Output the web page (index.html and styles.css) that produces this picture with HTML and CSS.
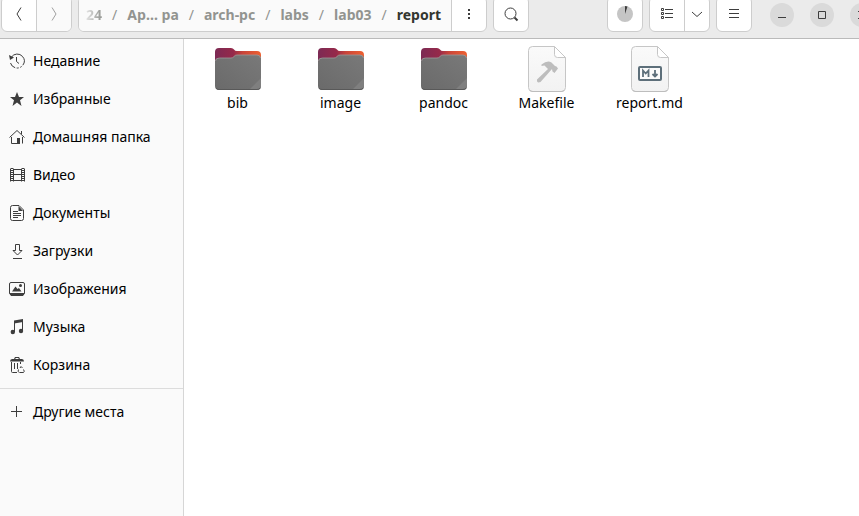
FILE: index.html
```html
<!DOCTYPE html>
<html lang="ru">
<head>
<meta charset="utf-8">
<title>report</title>
<link rel="stylesheet" href="styles.css">
</head>
<body>
<svg class="defs" aria-hidden="true">
  <defs>
    <linearGradient id="back" x1="0" y1="0" x2="1" y2="0"><stop offset="0" stop-color="#7c2a54"/><stop offset=".4" stop-color="#96294a"/><stop offset=".6" stop-color="#c8443a"/><stop offset="1" stop-color="#ee6030"/></linearGradient>
    <linearGradient id="front" x1="0" y1="1" x2="1" y2="0"><stop offset="0" stop-color="#6a6a6a"/><stop offset="1" stop-color="#797979"/></linearGradient>
    <linearGradient id="paper" x1="0" y1="0" x2="0" y2="1"><stop offset="0" stop-color="#fafafa"/><stop offset="1" stop-color="#f2f2f2"/></linearGradient>
    <symbol id="folder" viewBox="0 0 48 48">
      <path d="M1 18V7q0-4 4-4h12q2 0 3 1.500t3 1.500h20q4 0 4 4v9H1z" fill="url(#back)"/>
      <path d="M1 17q0-4 4-4h12q2 0 3-1.500t3-1.500h20q4 0 4 4v27q0 4-4 4H5q-4 0-4-4z" fill="url(#front)"/>
      <path d="M1.500 16q0-3 4-3H17q2 0 3-1.500t3-1.500h20q3 0 3.500 3" fill="none" stroke="#a09a9a" stroke-width=".8"/>
      <path d="M35 45l12-12v8q0 4-4 4z" fill="#7f7f7f"/>
      <path d="M2 43q1 1.500 3 1.500h38q2 0 3-1.500" fill="none" stroke="#595959"/>
    </symbol>
    <symbol id="sheet" viewBox="0 0 48 48">
      <path d="M9.500 1.500H31L42.500 12.500V42.500q0 4-4 4h-29q-4 0-4-4V5.500q0-4 4-4z" fill="url(#paper)" stroke="#c6c6c6"/>
      <path d="M7 45.500q1 1 3 1h28q2 0 3-1" fill="none" stroke="#bdbdbd"/>
      <path d="M31.500 1.500v8q0 3 3 3h8z" fill="#fff" stroke="#c6c6c6"/>
    </symbol>
  </defs>
</svg>

<header class="bar">
  <div class="group">
    <button class="btn" aria-label="Назад"><svg width="16" height="16"><path d="M10 1.500L6 8l4 6.500" class="ln"/></svg></button>
    <button class="btn off" aria-label="Вперёд"><svg width="16" height="16"><path d="M6 1.500L10 8l-4 6.500" class="ln"/></svg></button>
  </div>
  <div class="group path">
    <nav class="crumbs" aria-label="Путь">
      <a href="#">24</a><i>/</i><a href="#">Ар… ра</a><i>/</i><a href="#">arch-pc</a><i>/</i><a href="#">labs</a><i>/</i><a href="#">lab03</a><i>/</i><a href="#" class="here">report</a>
    </nav>
    <button class="btn" aria-label="Меню папки"><svg width="16" height="16"><path d="M7 3h2v2H7zM7 7h2v2H7zM7 11h2v2H7z" class="fl"/></svg></button>
  </div>
  <div class="group"><button class="btn" aria-label="Поиск"><svg width="16" height="16"><circle cx="7.500" cy="7.500" r="5.500" class="ln"/><path d="M11.500 11.500l3 3" class="ln thick"/></svg></button></div>

  <div class="group push"><button class="btn" aria-label="Операции"><svg width="16" height="16"><circle cx="8" cy="8" r="8" fill="#c5c5c5"/><path d="M8 8V0q1.500 0 2.500.4z" class="fl"/></svg></button></div>
  <div class="group">
    <button class="btn" aria-label="Список"><svg width="16" height="16"><path d="M2.500 2.500h2v2h-2zM2.500 6.500h2v2h-2zM2.500 10.500h2v2h-2zM6 3.500h8M6 7.500h8M6 11.500h8" class="ln"/></svg></button>
    <button class="btn slim" aria-label="Параметры вида"><svg width="16" height="16"><path d="M3 6l5 4.500L13 6" class="ln"/></svg></button>
  </div>
  <div class="group"><button class="btn" aria-label="Меню"><svg width="16" height="16"><path d="M3 3.500h10M3 7.500h10M3 11.500h10" class="ln"/></svg></button></div>
  <div class="window">
    <button class="round" aria-label="Свернуть"><svg width="16" height="16"><path d="M4 10.500h8" class="ln"/></svg></button>
    <button class="round" aria-label="Развернуть"><svg width="16" height="16"><path d="M4.500 4.500h7v7h-7z" class="ln"/></svg></button>
    <button class="round" aria-label="Закрыть"><svg width="16" height="16"><path d="M4 4l8 8M12 4l-8 8" class="ln"/></svg></button>
  </div>
</header>

<div class="main">
  <nav class="side" aria-label="Места">
    <a href="#"><svg width="16" height="16"><path d="M2.500 4A7 7 0 1 1 1.500 10" class="ln" stroke-dasharray="22 1.500 2 1.500 2 1.500"/><path d="M0 2l1 5 4-2.500z" class="fl"/><path d="M7.500 4v4.500l2.500 2" class="ln"/></svg>Недавние</a>
    <a href="#"><svg width="16" height="16"><path d="M8 1l2 5h5l-4 3.300L12.500 15 8 11.500 3.500 15 5 9.300 1 6h5z" class="fl"/></svg>Избранные</a>
    <a href="#"><svg width="16" height="16"><path d="M.5 8.500L8 1.500l7.500 7M2.500 8v6.500H8M13.500 8v6.500M12.500 2v3" class="ln"/><path d="M8 9h3v6H8z" class="fl"/></svg>Домашняя папка</a>
    <a href="#"><svg width="16" height="16"><path d="M4.500 1.500v13M12.500 1.500v13M4 2.500h9M4 7.500h9M4 13.500h9" class="ln"/><path d="M1.500 1.500v13M15.500 1.500v13" class="ln"/><path d="M3 1v14M14 1v14" class="ln" stroke-width="2" stroke-dasharray="1 1"/></svg>Видео</a>
    <a href="#"><svg width="16" height="16"><path d="M3.500.5H10L14.500 5v8.500q0 2-2 2h-9q-2 0-2-2v-11q0-2 2-2zM4 6.500h5M4 8.500h8M4 10.500h8M4 12.500h5" class="ln"/><path d="M9.500 1v5H14z" class="fl"/></svg>Документы</a>
    <a href="#"><svg width="16" height="16"><path d="M6.500 1.500h4v6H13L8.500 12 4 7.500h2.500zM4 15.500h9" class="ln"/></svg>Загрузки</a>
    <a href="#"><svg width="16" height="16"><rect x=".5" y="1.500" width="15" height="12" rx="1.500" class="ln"/><path d="M1 12h14v1.500L14 15H2l-1-1.500zM3 10.500l3.500-5 2 2.500L10 7l2.500 3.500z" class="fl"/><circle cx="11.500" cy="4.500" r="1.500" class="fl"/></svg>Изображения</a>
    <a href="#"><svg width="16" height="16"><path d="M5 1.500L14 0v3L5 4.500z" class="fl"/><path d="M5.500 2v11M13.500 1v11" class="ln"/><circle cx="3.800" cy="13" r="2.200" class="fl"/><circle cx="12" cy="12" r="2.200" class="fl"/></svg>Музыка</a>
    <a href="#"><svg width="16" height="16"><path d="M1 4.500Q1 2 3 2h2l1-2h4l1 2h2q2 0 2 2.500zM6.500 1v1h3V1z" class="fl" fill-rule="evenodd"/><path d="M2.500 5v9.500q0 1 1 1H8M5.500 6v6M8.500 6v6M11.500 5v2" class="ln"/><path d="M10 15.500q-1.500-1-.5-3M11 11l1-1.500L13.500 11M14.500 12.500q1.500 2 0 3h-4" class="ln"/></svg>Корзина</a>
    <hr>
    <a href="#"><svg width="16" height="16"><path d="M2 7.500h11M7.500 2v11" class="ln"/></svg>Другие места</a>
  </nav>
  <main class="files">
    <a href="#"><svg class="pic"><use href="#folder"/></svg>bib</a>
    <a href="#"><svg class="pic"><use href="#folder"/></svg>image</a>
    <a href="#"><svg class="pic"><use href="#folder"/></svg>pandoc</a>
    <a href="#"><svg class="pic" viewBox="0 0 48 48"><use href="#sheet"/><path d="M14 34.500L25 24l-3.500-3.500-3 .5v-1.500q6-4.500 10-2l3.500 3.500 1.500.5 1.500 2-3.500 4.500-2-1.500-.5-2.500L17.500 37q-4 1.500-3.500-2.500z" fill="#bdbdbd"/></svg>Makefile</a>
    <a href="#"><svg class="pic" viewBox="0 0 48 48"><use href="#sheet"/><rect x="13" y="22" width="22" height="13" rx="1" fill="#fafafa" stroke="#5d6f7a" stroke-width="2"/><path d="M17 32v-6.500l2.700 3 2.800-3V32M29 25v6M26.500 29l2.500 2.500 2.500-2.500" fill="none" stroke="#5d6f7a" stroke-width="1.800"/></svg>report.md</a>
  </main>
</div>
</body>
</html>
```

FILE: styles.css
```css
* { box-sizing: border-box; }
body {
  margin: 0;
  min-height: 100vh;
  display: flex;
  flex-direction: column;
  overflow: hidden;
  background: #fff;
  color: #000;
  font: 450 14px/20px "Noto Sans", sans-serif;
}
a { color: inherit; text-decoration: none; }
svg { flex: none; overflow: visible; }
.defs { position: absolute; width: 0; height: 0; }
.ln { fill: none; stroke: #3d3d3d; }
.thick { stroke-width: 2; }
.fl { fill: #3d3d3d; }

.bar {
  display: flex;
  align-items: flex-end;
  gap: 6px;
  height: 39px;
  padding: 0 0 6px 1px;
  background: #ebebeb;
  border-bottom: 1px solid #bababa;
}
.group {
  display: flex;
  flex: none;
  height: 36px;
  overflow: hidden;
  background: #fff;
  border: 1px solid #cdcdcd;
  border-radius: 6px;
}
.push { margin-left: auto; }
.btn {
  display: flex;
  align-items: center;
  justify-content: center;
  width: 34px;
  padding: 0;
  background: none;
  border: 0;
}
.btn + .btn, .crumbs + .btn { width: 35px; border-left: 1px solid #cdcdcd; }
.btn.slim { width: 25px; }
.btn.off { background: #fafafa; }
.off .ln { stroke: #a0a0a0; }
.path { flex: 0 1 409px; min-width: 0; }
.crumbs {
  display: flex;
  flex: 1;
  justify-content: flex-end;
  align-items: center;
  gap: 10px;
  min-width: 0;
  padding: 2px 10px 0 7px;
  overflow: hidden;
  white-space: nowrap;
  background: #fafafa;
  color: #929490;
  font-weight: 700;
}
.crumbs i { font-style: normal; font-weight: 400; }
.crumbs a:first-child {
  background: linear-gradient(90deg, #e4e4e4, #929490);
  background-clip: text;
  color: transparent;
}
.crumbs .here { color: #33362f; }
.window { display: flex; gap: 16px; margin: 0 -15px 0 12px; padding-bottom: 5px; }
.round {
  display: flex;
  align-items: center;
  justify-content: center;
  width: 24px;
  height: 24px;
  padding: 0;
  border: 0;
  border-radius: 50%;
  background: #dadada;
}

.main { display: flex; flex: 1; }
.side {
  flex: none;
  width: 184px;
  padding-top: 3px;
  background: #fafafa;
  border-right: 1px solid #d6d6d6;
}
.side a {
  display: flex;
  align-items: center;
  gap: 8px;
  height: 38px;
  padding-left: 9px;
}
.side hr { margin: 4px 0; border: 0; border-top: 1px solid #dcdcdc; }
.files {
  display: flex;
  flex: 1;
  flex-wrap: wrap;
  align-content: flex-start;
  padding: 6px 2px;
}
.files a {
  display: flex;
  flex-direction: column;
  align-items: center;
  width: 103px;
}
.pic { width: 48px; height: 48px; }
```
